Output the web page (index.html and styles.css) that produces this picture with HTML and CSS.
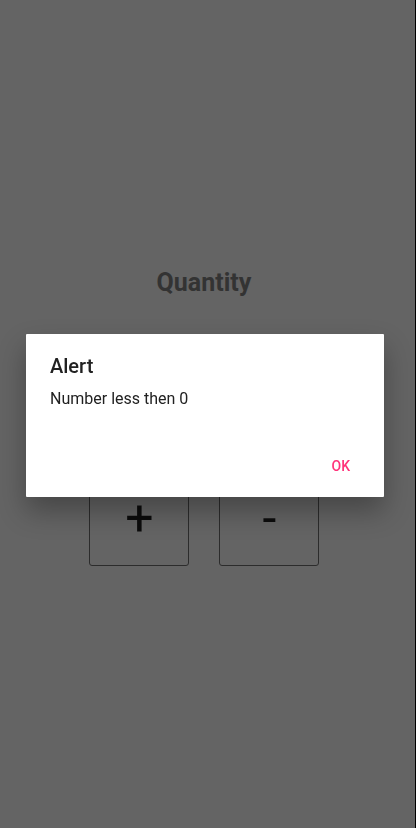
FILE: index.html
```html
<!DOCTYPE html>
<html lang="en">
<head>
<meta charset="utf-8">
<meta name="viewport" content="width=device-width, initial-scale=1">
<title>Quantity</title>
<link rel="stylesheet" href="styles.css">
</head>
<body>
<main class="screen">
  <h1 class="title">Quantity</h1>
  <div class="controls">
    <button class="step" type="button">+</button>
    <button class="step" type="button">-</button>
  </div>
</main>
<div class="overlay">
  <section class="dialog" role="alertdialog" aria-labelledby="dialog-title" aria-describedby="dialog-text">
    <h2 class="dialog-title" id="dialog-title">Alert</h2>
    <p class="dialog-text" id="dialog-text">Number less then 0</p>
    <div class="actions"><button class="ok" type="button">OK</button></div>
  </section>
</div>
</body>
</html>
```
FILE: styles.css
```css
* {
  box-sizing: border-box;
}

body {
  margin: 0;
  background: #646464;
  color: #212121;
  font-family: Roboto, sans-serif;
}

.screen {
  display: flex;
  flex-direction: column;
  align-items: center;
  gap: 167px;
  min-height: 100vh;
  padding: 267px 7px 0 0;
  border-right: 1px solid #000;
}

.title {
  margin: 0;
  color: #333;
  font-size: 25px;
  line-height: 32px;
  font-weight: 700;
}

.controls {
  display: flex;
  gap: 30px;
}

.step {
  width: 100px;
  height: 100px;
  padding: 4px 0 0 1px;
  border: 1px solid #2c2c2c;
  border-radius: 3px;
  background: transparent;
  color: #0c0c0c;
  font: 400 50px/58px Roboto, sans-serif;
}

.overlay {
  position: fixed;
  inset: 0;
  display: flex;
  align-items: center;
  padding: 3px 32px 0 26px;
}

.dialog {
  flex: 1;
  padding: 20px 24px 13px;
  border-radius: 1px;
  background: #fff;
  box-shadow: 0 14px 28px rgba(0, 0, 0, 0.3);
}

.dialog-title {
  margin: 0 0 8px;
  font-size: 20px;
  line-height: 24px;
  font-weight: 500;
}

.dialog-text {
  margin: 0 0 37px;
  font-size: 16px;
  line-height: 25px;
}

.actions {
  display: flex;
  justify-content: flex-end;
}

.ok {
  padding: 8px 10px;
  border: 0;
  background: transparent;
  color: #ff337a;
  font: 500 14px/20px Roboto, sans-serif;
}
```
